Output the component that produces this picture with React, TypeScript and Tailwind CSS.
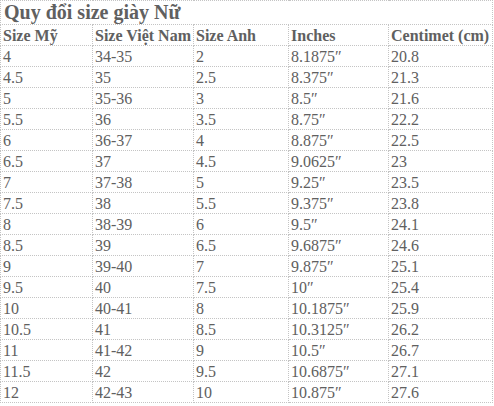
import React from "react";

const rows: string[][] = [
  ["4", "34-35", "2", "8.1875″", "20.8"],
  ["4.5", "35", "2.5", "8.375″", "21.3"],
  ["5", "35-36", "3", "8.5″", "21.6"],
  ["5.5", "36", "3.5", "8.75″", "22.2"],
  ["6", "36-37", "4", "8.875″", "22.5"],
  ["6.5", "37", "4.5", "9.0625″", "23"],
  ["7", "37-38", "5", "9.25″", "23.5"],
  ["7.5", "38", "5.5", "9.375″", "23.8"],
  ["8", "38-39", "6", "9.5″", "24.1"],
  ["8.5", "39", "6.5", "9.6875″", "24.6"],
  ["9", "39-40", "7", "9.875″", "25.1"],
  ["9.5", "40", "7.5", "10″", "25.4"],
  ["10", "40-41", "8", "10.1875″", "25.9"],
  ["10.5", "41", "8.5", "10.3125″", "26.2"],
  ["11", "41-42", "9", "10.5″", "26.7"],
  ["11.5", "42", "9.5", "10.6875″", "27.1"],
  ["12", "42-43", "10", "10.875″", "27.6"],
];

const headers = ["Size Mỹ", "Size Việt Nam", "Size Anh", "Inches", "Centimet (cm)"];

const cell = "border border-dotted border-[#c4c4c4] px-[2px] py-0 text-[16px] leading-[19px] whitespace-nowrap font-['Liberation_Serif','Times_New_Roman',serif]";

export default function App() {
  return (
    <div className="bg-white w-[494px] h-[406px] text-[#606060] font-['Liberation_Serif','Times_New_Roman',serif]">
      <table className="w-[492px] table-fixed border-collapse border border-dotted border-[#c4c4c4] font-['Liberation_Serif','Times_New_Roman',serif]">
        <colgroup>
          <col className="w-[92px]" />
          <col className="w-[101px]" />
          <col className="w-[95px]" />
          <col className="w-[100px]" />
          <col className="w-[104px]" />
        </colgroup>
        <tbody>
          <tr className="h-[24px]">
            <td colSpan={5} className="border border-dotted border-[#c4c4c4] px-[3px] py-0 text-[20px] font-bold leading-[23px] whitespace-nowrap font-['Liberation_Serif','Times_New_Roman',serif]">
              Quy đổi size giày Nữ
            </td>
          </tr>
          <tr className="h-[21px]">
            {headers.map((h, i) => (
              <td key={i} className={cell + " font-bold"}>
                {h}
              </td>
            ))}
          </tr>
          {rows.map((r, ri) => (
            <tr key={ri} className="h-[21px]">
              {r.map((c, ci) => (
                <td key={ci} className={cell}>
                  {c}
                </td>
              ))}
            </tr>
          ))}
        </tbody>
      </table>
    </div>
  );
}
